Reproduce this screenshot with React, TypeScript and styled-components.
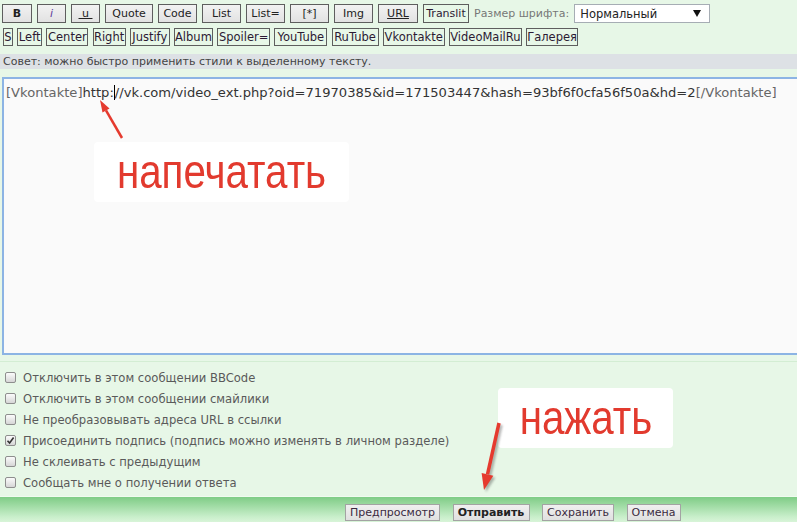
import React from "react";
import styled, { createGlobalStyle, css } from "styled-components";

const GlobalStyle = createGlobalStyle`
  html, body { margin: 0; padding: 0; background: #e7f7e7; }
  body { font-family: "DejaVu Sans", Verdana, sans-serif; }
  * { box-sizing: border-box; }
`;

const Page = styled.div`
  position: relative;
  width: 797px;
  height: 522px;
  overflow: hidden;
  background: #e7f7e7;
  display: flex;
  flex-direction: column;
`;

const ToolRow = styled.div<{ $top: number; $left: number; $gap: number }>`
  display: flex;
  align-items: center;
  padding: ${(p) => p.$top}px 0 0 ${(p) => p.$left}px;
  gap: ${(p) => p.$gap}px;
`;

const ToolButton = styled.button<{
  $w: number;
  $h: number;
  $flat?: boolean;
  $bold?: boolean;
  $italic?: boolean;
  $under?: boolean;
  $size: number;
}>`
  width: ${(p) => p.$w}px;
  height: ${(p) => p.$h}px;
  padding: 0;
  margin: 0;
  flex: none;
  font-family: "DejaVu Sans", Verdana, sans-serif;
  font-size: ${(p) => p.$size}px;
  line-height: ${(p) => p.$h - 2}px;
  color: #222;
  white-space: pre;
  border: 1px solid #5e5e5e;
  border-radius: 0;
  ${(p) =>
    p.$flat
      ? css`
          background: transparent;
          color: #2c1a34;
        `
      : css`
          background: linear-gradient(#f2f2f2, #e2e2e2);
        `}
  font-weight: ${(p) => (p.$bold ? 700 : 400)};
  font-style: ${(p) => (p.$italic ? "italic" : "normal")};
  text-decoration: ${(p) => (p.$under ? "underline" : "none")};
  ${(p) =>
    p.$italic &&
    css`
      color: #5b3a9a;
    `}
`;

const SizeLabel = styled.span`
  font-size: 11px;
  color: #777;
  white-space: nowrap;
`;

const Select = styled.div`
  width: 136px;
  height: 19px;
  background: #fff;
  border: 1px solid #a6adb4;
  display: flex;
  align-items: center;
  justify-content: space-between;
  padding: 0 8px 0 5px;
  font-size: 11.5px;
  color: #222;
`;

const TipBar = styled.div`
  margin-top: 8px;
  height: 15px;
  background: #dde1e5;
  font-size: 11px;
  line-height: 15px;
  color: #444;
  padding-left: 3px;
  white-space: nowrap;
`;

const Editor = styled.div`
  margin: 8px 0 0 2px;
  width: 800px;
  height: 278px;
  flex: none;
  background: #fafafa;
  border: 2px solid #8cb4e4;
  padding: 5px 0 0 2px;
  font-size: 13.1px;
  line-height: 17px;
  white-space: nowrap;
  color: #333;
`;

const Tag = styled.span`
  color: #666;
`;

const Caret = styled.span`
  display: inline-block;
  width: 1px;
  height: 15px;
  background: #000;
  vertical-align: -3px;
`;

const Options = styled.div`
  margin-top: 6px;
  border-top: 1px solid #d3edd3;
  padding: 5px 0 3px 5px;
  display: flex;
  flex-direction: column;
  border-bottom: 1px solid #f0fbf0;
`;

const OptionRow = styled.label`
  height: 21px;
  display: flex;
  align-items: center;
  gap: 7px;
  font-size: 11.6px;
  color: #5a5a5a;
  white-space: nowrap;
`;

const Box = styled.span`
  width: 11px;
  height: 11px;
  border: 1px solid #8e8e8e;
  border-radius: 2px;
  background: linear-gradient(#fbfbfb, #d6d6d6);
  display: flex;
  align-items: center;
  justify-content: center;
  flex: none;
`;

const BottomBar = styled.div`
  height: 25px;
  background: linear-gradient(#7fcc86, #c9efcb 80%, #d8f4d8);
  display: flex;
  align-items: flex-start;
  padding: 7px 0 0 345px;
  gap: 12.5px;
`;

const SubmitButton = styled.button<{ $bold?: boolean; $w: number }>`
  width: ${(p) => p.$w}px;
  height: 17px;
  padding: 0;
  margin: 0;
  border: 1px solid #a3a3a3;
  background: linear-gradient(#f0f0f0, #e0e0e0);
  font-family: "DejaVu Sans", Verdana, sans-serif;
  font-size: 11px;
  line-height: 15px;
  font-weight: ${(p) => (p.$bold ? 700 : 400)};
  color: ${(p) => (p.$bold ? "#222" : "#3a2a40")};
  white-space: nowrap;
`;

const Callout = styled.div<{ $left: number; $top: number; $w: number }>`
  position: absolute;
  left: ${(p) => p.$left}px;
  top: ${(p) => p.$top}px;
  width: ${(p) => p.$w}px;
  height: 60px;
  background: #fff;
  border-radius: 4px;
  display: flex;
  justify-content: center;
`;

const CalloutText = styled.span`
  font-family: "Liberation Sans", Arial, sans-serif;
  font-size: 48px;
  line-height: 60px;
  color: #e23a2e;
  transform: scaleX(0.84);
  white-space: nowrap;
`;

const Overlay = styled.svg`
  position: absolute;
  left: 0;
  top: 0;
  width: 797px;
  height: 522px;
  pointer-events: none;
`;

const row1 = [
  { t: "B", w: 30, bold: true },
  { t: "i", w: 29, italic: true },
  { t: " u ", w: 29, under: true },
  { t: "Quote", w: 48 },
  { t: "Code", w: 39 },
  { t: "List", w: 39 },
  { t: "List=", w: 39 },
  { t: "[*]", w: 39 },
  { t: "Img", w: 39 },
  { t: "URL", w: 40, under: true },
  { t: "Translit", w: 46, flat: true },
];

const row2 = [
  { t: "S", w: 10 },
  { t: "Left", w: 25 },
  { t: "Center", w: 42 },
  { t: "Right", w: 33 },
  { t: "Justify", w: 40 },
  { t: "Album", w: 39 },
  { t: "Spoiler=", w: 53 },
  { t: "YouTube", w: 53 },
  { t: "RuTube", w: 47 },
  { t: "Vkontakte", w: 62 },
  { t: "VideoMailRu", w: 73 },
  { t: "Галерея", w: 52 },
];

const options = [
  { t: "Отключить в этом сообщении BBCode", c: false },
  { t: "Отключить в этом сообщении смайлики", c: false },
  { t: "Не преобразовывать адреса URL в ссылки", c: false },
  { t: "Присоединить подпись (подпись можно изменять в личном разделе)", c: true },
  { t: "Не склеивать с предыдущим", c: false },
  { t: "Сообщать мне о получении ответа", c: false },
];

export default function App() {
  return (
    <>
      <GlobalStyle />
      <Page>
        <ToolRow $top={4} $left={2} $gap={5}>
          {row1.map((b) => (
            <ToolButton
              key={b.t}
              $w={b.w}
              $h={19}
              $size={11}
              $bold={b.bold}
              $italic={b.italic}
              $under={b.under}
              $flat={b.flat}
            >
              {b.t}
            </ToolButton>
          ))}
          <SizeLabel>Размер шрифта:</SizeLabel>
          <Select>
            <span>Нормальный</span>
            <svg width="8" height="7" viewBox="0 0 8 7">
              <path d="M0 0 H8 L4 7 Z" fill="#111" />
            </svg>
          </Select>
        </ToolRow>
        <ToolRow $top={5} $left={3} $gap={4.2}>
          {row2.map((b) => (
            <ToolButton key={b.t} $w={b.w} $h={18} $size={11.5} $flat>
              {b.t}
            </ToolButton>
          ))}
        </ToolRow>
        <TipBar>Совет: можно быстро применить стили к выделенному тексту.</TipBar>
        <Editor>
          <Tag>[Vkontakte]</Tag>http:
          <Caret />
          //vk.com/video_ext.php?oid=71970385&amp;id=171503447&amp;hash=93bf6f0cfa56f50a&amp;hd=2
          <Tag>[/Vkontakte]</Tag>
        </Editor>
        <Options>
          {options.map((o) => (
            <OptionRow key={o.t}>
              <Box>
                {o.c && (
                  <svg width="9" height="9" viewBox="0 0 9 9">
                    <path d="M1.5 4.8 L3.6 7 L7.6 1.5" fill="none" stroke="#333" strokeWidth="1.6" />
                  </svg>
                )}
              </Box>
              {o.t}
            </OptionRow>
          ))}
        </Options>
        <BottomBar>
          <SubmitButton $w={95}>Предпросмотр</SubmitButton>
          <SubmitButton $w={77} $bold>Отправить</SubmitButton>
          <SubmitButton $w={72}>Сохранить</SubmitButton>
          <SubmitButton $w={54}>Отмена</SubmitButton>
        </BottomBar>

        <Callout $left={94} $top={142} $w={255}>
          <CalloutText>напечатать</CalloutText>
        </Callout>
        <Callout $left={498} $top={388} $w={175}>
          <CalloutText>нажать</CalloutText>
        </Callout>

        <Overlay viewBox="0 0 797 522">
          <defs>
            <filter id="sh" x="-50%" y="-50%" width="200%" height="200%">
              <feGaussianBlur stdDeviation="1" />
            </filter>
          </defs>
          <line x1="122" y1="138" x2="106" y2="110.4" stroke="#e53a2e" strokeWidth="2.5" />
          <polygon points="100,100 109.5,108.4 102.5,112.4" fill="#e53a2e" />
          <g opacity="0.35" filter="url(#sh)" transform="translate(2,2)">
            <line x1="499" y1="423" x2="487.5" y2="474.4" stroke="#333" strokeWidth="3.5" />
            <polygon points="484,490 493.3,475.7 481.6,473.1" fill="#333" />
          </g>
          <line x1="499" y1="423" x2="487.5" y2="474.4" stroke="#e53a2e" strokeWidth="3.5" />
          <polygon points="484,490 493.3,475.7 481.6,473.1" fill="#e53a2e" />
        </Overlay>
      </Page>
    </>
  );
}
